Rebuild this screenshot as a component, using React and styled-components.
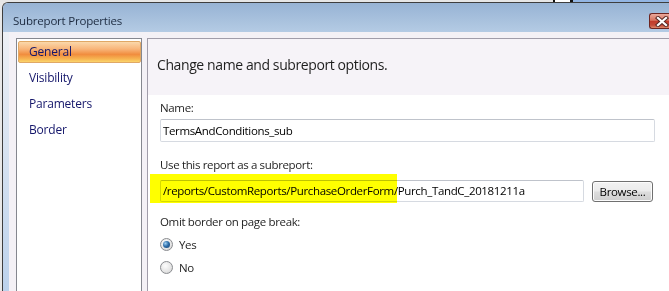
import React from 'react';
import styled, { createGlobalStyle } from 'styled-components';

const GlobalStyle = createGlobalStyle`
  html, body {
    margin: 0;
    padding: 0;
    background: #e8e8e8;
    overflow: hidden;
  }
  body {
    font-family: "Open Sans", "Noto Sans", sans-serif;
  }
`;

// what shows of the desktop above the dialog
const DesktopStrip = styled.div`
  height: 2px;
  background: linear-gradient(
    to right,
    #e6e6e6 0 553px,
    #111 553px 555px,
    #fff 555px 570px,
    #111 570px 573px,
    #93b5e2 573px
  );
`;

const Window = styled.div`
  margin-left: 2px;
  width: 666px;
  height: 289px;
  border-left: 1px solid #3e3e3e;
  border-top: 1px solid #3e3e3e;
  border-top-left-radius: 6px;
  display: flex;
  flex-direction: column;
  overflow: hidden;
`;

const TitleBar = styled.div`
  height: 29px;
  flex: none;
  display: flex;
  align-items: flex-start;
  background: linear-gradient(#97b3d4, #b4cbe4);
`;

const Title = styled.div`
  margin: 10px 0 0 10px;
  font-size: 11.5px;
  letter-spacing: -0.2px;
  line-height: 16px;
  color: #1c2a3f;
`;

// the window runs past the right edge, so only the left part of the close button shows
const CloseButton = styled.div`
  margin: 10px 0 0 auto;
  width: 20px;
  height: 16px;
  box-sizing: border-box;
  border: 1px solid #6e2520;
  border-right: none;
  border-radius: 3px 0 0 3px;
  background: linear-gradient(#eaa99b 0%, #d7735f 45%, #c13a2a 52%, #c44a38 80%, #de8a6c 100%);
  display: flex;
  align-items: center;
  padding-left: 5px;
  overflow: hidden;

  svg {
    flex: none;
  }
`;

const Frame = styled.div`
  flex: 1;
  display: flex;
  min-height: 0;
`;

const FrameEdge = styled.div`
  width: 6px;
  flex: none;
  background: linear-gradient(#edf0f5, #bcd2ec);
`;

const Client = styled.div`
  flex: 1;
  display: flex;
  gap: 5px;
  padding: 6px 0 0 7px;
  background: #f4f1f6;
  min-width: 0;
`;

const ListBox = styled.div`
  width: 126px;
  flex: none;
  box-sizing: border-box;
  border: 1px solid #85878f;
  border-bottom: none;
  background: #fff;
  padding: 2px 0 0 1px;
  display: flex;
  flex-direction: column;
  gap: 4px;
`;

const ListItem = styled.div`
  height: 22px;
  box-sizing: border-box;
  padding-left: 10px;
  font-size: 12px;
  letter-spacing: -0.2px;
  line-height: 20px;
  color: #14166a;
  border: 1px solid ${p => (p.$active ? '#e0a866' : 'transparent')};
  border-radius: 2px;
  background: ${p =>
    p.$active
      ? 'linear-gradient(#fbd8ab 0%, #f8b57a 35%, #f18d3e 62%, #f7b552 85%, #fbd56c 100%)'
      : 'transparent'};
`;

const Panel = styled.div`
  flex: 1;
  min-width: 0;
  display: flex;
  flex-direction: column;
  border-left: 1px solid #a19daa;
  border-top: 1px solid #a19daa;
`;

const PanelHeader = styled.div`
  height: 56px;
  flex: none;
  box-sizing: border-box;
  padding: 16px 0 0 9px;
  background: #f6f3f8;
  font-size: 14px;
  letter-spacing: -0.4px;
  line-height: 20px;
  color: #1e1e1e;
`;

const PanelBody = styled.div`
  flex: 1;
  background: #fff;
  padding-left: 12px;
  display: flex;
  flex-direction: column;
  align-items: flex-start;
  font-size: 11.5px;
  letter-spacing: -0.35px;
`;

const Label = styled.div`
  margin-top: ${p => p.$top}px;
  height: 16px;
  line-height: 16px;
  color: #1e1e1e;
`;

const TextField = styled.div`
  margin-top: ${p => p.$top || 0}px;
  width: ${p => p.$width}px;
  height: ${p => p.$height}px;
  box-sizing: border-box;
  border: 1px solid #d6dae1;
  border-top-color: #bfc3cb;
  border-radius: 2px;
  padding-left: 2px;
  line-height: ${p => p.$height - 2}px;
  color: #000;
  white-space: nowrap;
`;

const FieldRow = styled.div`
  margin-top: 7px;
  display: flex;
  gap: 8px;
  align-items: flex-start;
`;

// highlighter mark drawn over the path text
const Mark = styled.span`
  position: relative;
  display: inline-block;
  vertical-align: top;

  &::before {
    content: '';
    position: absolute;
    left: -13px;
    right: -3px;
    top: -7px;
    bottom: -2px;
    background: #ffff00;
    mix-blend-mode: multiply;
  }
`;

const Button = styled.div`
  margin-top: 1px;
  width: 61px;
  height: 21px;
  box-sizing: border-box;
  border: 1px solid #707070;
  border-radius: 3px;
  background: linear-gradient(#f2f2f2 0%, #ebebeb 48%, #dddddd 52%, #cfcfcf 100%);
  box-shadow: inset 0 0 0 1px #fcfcfc;
  line-height: 19px;
  text-align: center;
  color: #000;
`;

const RadioRow = styled.div`
  margin-top: ${p => p.$top}px;
  height: 16px;
  display: flex;
  align-items: center;
  gap: 6px;
  color: #1e1e1e;
`;

const RadioCircle = styled.span`
  position: relative;
  width: 13px;
  height: 13px;
  box-sizing: border-box;
  border-radius: 50%;
  border: 1px solid #8a8c90;
  background: radial-gradient(circle at 40% 35%, #fdfdfd 0%, #e4e4e4 60%, #c9c9c9 100%);

  &::after {
    content: '';
    display: ${p => (p.$checked ? 'block' : 'none')};
    position: absolute;
    left: 2px;
    top: 2px;
    width: 7px;
    height: 7px;
    border-radius: 50%;
    background: radial-gradient(circle at 35% 35%, #9fd0f2 0%, #2f6faa 45%, #163f6c 100%);
  }
`;

const CloseIcon = () => (
  <svg width="14" height="11" viewBox="0 0 14 11">
    <path d="M3 2 L11 9 M11 2 L3 9" stroke="#5a2a26" strokeWidth="4.2" strokeLinecap="square" />
    <path d="M3 2 L11 9 M11 2 L3 9" stroke="#fff" strokeWidth="2.2" strokeLinecap="square" />
  </svg>
);

const pages = ['General', 'Visibility', 'Parameters', 'Border'];

const App = () => (
  <>
    <GlobalStyle />
    <DesktopStrip />
    <Window>
      <TitleBar>
        <Title>Subreport Properties</Title>
        <CloseButton>
          <CloseIcon />
        </CloseButton>
      </TitleBar>
      <Frame>
        <FrameEdge />
        <Client>
          <ListBox>
            {pages.map((page, i) => (
              <ListItem key={page} $active={i === 0}>
                {page}
              </ListItem>
            ))}
          </ListBox>
          <Panel>
            <PanelHeader>Change name and subreport options.</PanelHeader>
            <PanelBody>
              <Label $top={5}>Name:</Label>
              <TextField $top={3} $width={495} $height={23}>
                TermsAndConditions_sub
              </TextField>
              <Label $top={15}>Use this report as a subreport:</Label>
              <FieldRow>
                <TextField $width={424} $height={22}>
                  <Mark>/reports/CustomReports/PurchaseOrderForm</Mark>/Purch_TandC_20181211a
                </TextField>
                <Button>Browse...</Button>
              </FieldRow>
              <Label $top={12}>Omit border on page break:</Label>
              <RadioRow $top={6}>
                <RadioCircle $checked />
                Yes
              </RadioRow>
              <RadioRow $top={7}>
                <RadioCircle />
                No
              </RadioRow>
            </PanelBody>
          </Panel>
        </Client>
      </Frame>
    </Window>
  </>
);

export default App;
